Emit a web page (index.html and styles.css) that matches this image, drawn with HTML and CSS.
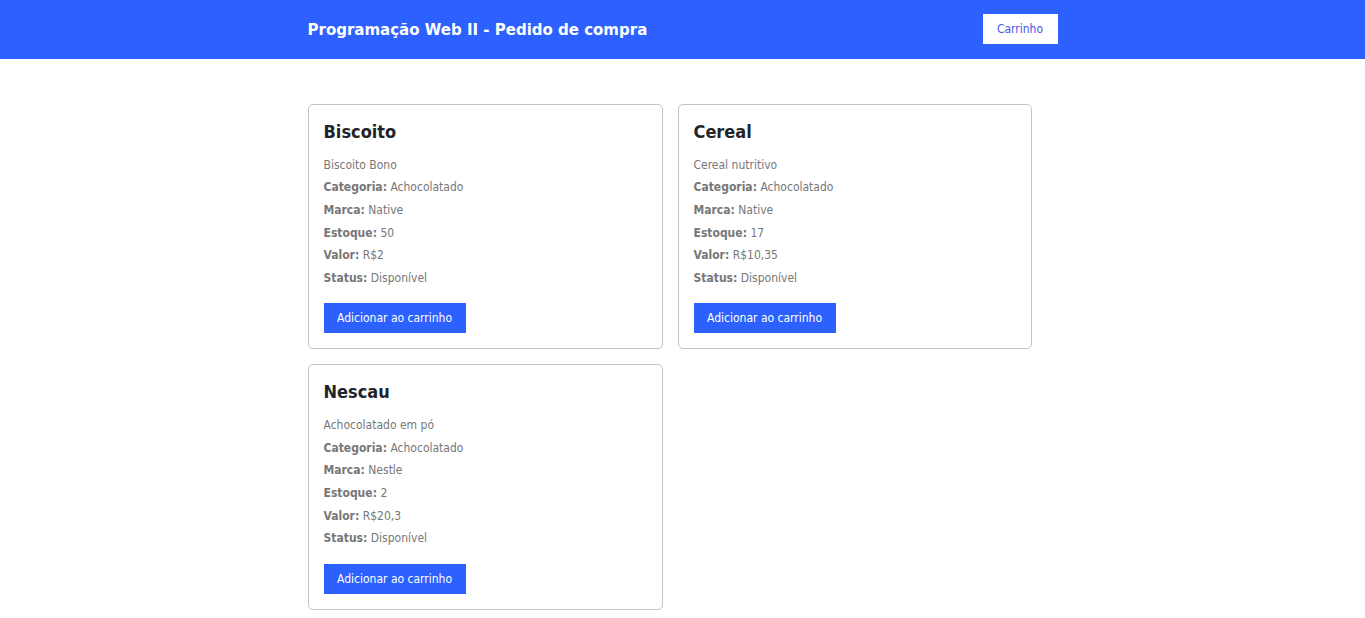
FILE: index.html
```html
<!DOCTYPE html>
<html lang="pt-BR">
<head>
<meta charset="utf-8">
<title>Pedido de compra</title>
<link rel="stylesheet" href="styles.css">
</head>
<body>
<header class="topbar">
  <div class="topbar-inner">
    <h1 class="brand">Programação Web II - Pedido de compra</h1>
    <button class="cart-btn">Carrinho</button>
  </div>
</header>
<main class="container">
  <div class="grid">
    <div class="card">
      <h2 class="card-title">Biscoito</h2>
      <div class="line">Biscoito Bono</div>
      <div class="line"><b>Categoria:</b> Achocolatado</div>
      <div class="line"><b>Marca:</b> Native</div>
      <div class="line"><b>Estoque:</b> 50</div>
      <div class="line"><b>Valor:</b> R$2</div>
      <div class="line"><b>Status:</b> Disponível</div>
      <button class="add-btn">Adicionar ao carrinho</button>
    </div>
    <div class="card">
      <h2 class="card-title">Cereal</h2>
      <div class="line">Cereal nutritivo</div>
      <div class="line"><b>Categoria:</b> Achocolatado</div>
      <div class="line"><b>Marca:</b> Native</div>
      <div class="line"><b>Estoque:</b> 17</div>
      <div class="line"><b>Valor:</b> R$10,35</div>
      <div class="line"><b>Status:</b> Disponível</div>
      <button class="add-btn">Adicionar ao carrinho</button>
    </div>
    <div class="card">
      <h2 class="card-title">Nescau</h2>
      <div class="line">Achocolatado em pó</div>
      <div class="line"><b>Categoria:</b> Achocolatado</div>
      <div class="line"><b>Marca:</b> Nestle</div>
      <div class="line"><b>Estoque:</b> 2</div>
      <div class="line"><b>Valor:</b> R$20,3</div>
      <div class="line"><b>Status:</b> Disponível</div>
      <button class="add-btn">Adicionar ao carrinho</button>
    </div>
  </div>
</main>
</body>
</html>
```

FILE: styles.css
```css
* { box-sizing: border-box; }
html, body { margin: 0; padding: 0; background: #fff; }
body {
  font-family: "DejaVu Sans Condensed", "DejaVu Sans", sans-serif;
  font-size: 12px;
  color: #6f6f6f;
}
.topbar {
  background: #2d61ff;
  height: 59px;
}
.topbar-inner {
  width: 750px;
  margin: 0 auto;
  height: 100%;
  display: flex;
  align-items: center;
  justify-content: space-between;
}
.brand {
  margin: 0;
  font-family: "DejaVu Sans", sans-serif;
  font-weight: bold;
  font-size: 15px;
  color: #fff;
  padding-top: 1px;
}
.cart-btn {
  width: 75px;
  height: 30px;
  background: #fff;
  border: none;
  color: #4658e6;
  font-family: "DejaVu Sans Condensed", "DejaVu Sans", sans-serif;
  font-size: 12px;
  padding: 0;
  margin-bottom: 1px;
}
.container {
  width: 750px;
  margin: 45px auto 0;
}
.grid {
  display: grid;
  grid-template-columns: 355px 354px;
  column-gap: 15px;
  row-gap: 15px;
}
.card {
  border: 1px solid #c4c4c4;
  border-radius: 5px;
  padding: 16px 15px 15px;
  display: flex;
  flex-direction: column;
  align-items: flex-start;
}
.card-title {
  margin: 0 0 11px;
  font-size: 18px;
  line-height: 21.6px;
  font-weight: bold;
  color: #212529;
}
.line {
  line-height: 22.7px;
  color: #777;
}
.line b { color: #777; }
.add-btn {
  margin-top: 13.5px;
  height: 30px;
  padding: 0 13.5px;
  border: none;
  background: #2d61ff;
  color: #fff;
  font-family: "DejaVu Sans Condensed", "DejaVu Sans", sans-serif;
  font-size: 12px;
}
```
